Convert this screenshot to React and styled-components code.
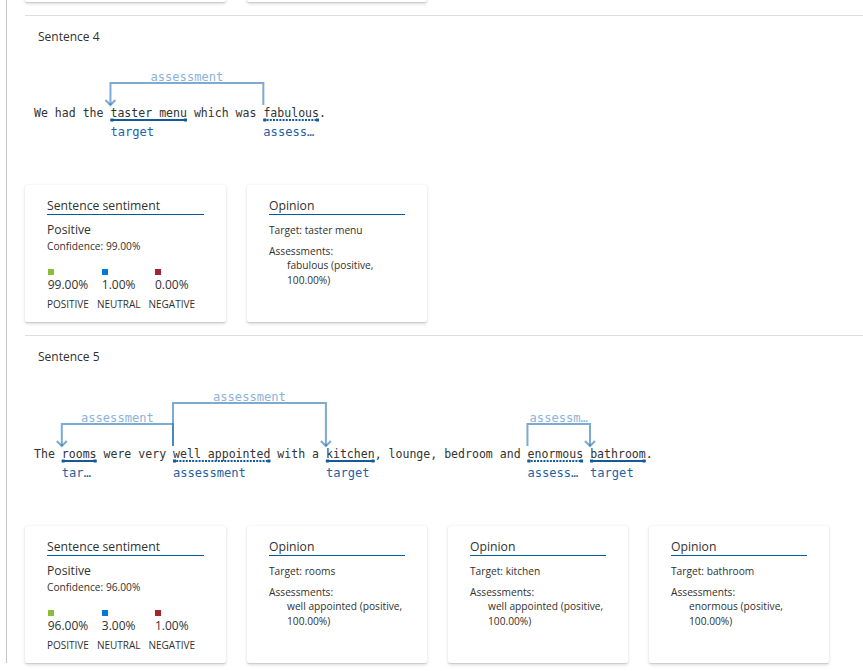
import React from "react";
import styled, { createGlobalStyle } from "styled-components";

const GlobalStyle = createGlobalStyle`
  html, body { margin: 0; padding: 0; background: #ffffff; }
  body { font-family: "Open Sans", "Noto Sans", sans-serif; color: #323130; }
`;

const CW = 6.95;
const X0 = 9;
const MONO = '"DejaVu Sans Mono", "Liberation Mono", monospace';
const LABEL_CW = 7.3;

const Page = styled.div`
  padding-left: 6px;
  height: 671px;
  overflow: hidden;
`;

const Rail = styled.div`
  border-left: 1px solid #c8c6c4;
  padding-left: 18px;
  min-height: 671px;
`;

const CardRow = styled.div`
  display: flex;
  gap: 21px;
  align-items: stretch;
  margin-top: ${(p) => p.$top}px;
`;

const Card = styled.div`
  width: ${(p) => p.$w}px;
  box-sizing: border-box;
  padding: 12px 22px 11px;
  background: #ffffff;
  border-radius: 2px;
  box-shadow: 0 1.6px 3.6px 0 rgba(0, 0, 0, 0.132), 0 0.3px 0.9px 0 rgba(0, 0, 0, 0.108);
`;

const StubCard = styled(Card)`
  height: 137px;
`;

const Section = styled.section`
  border-top: 1px solid #e1dfdd;
  margin-top: 13px;
`;

const Title = styled.div`
  margin: 13px 0 0 13px;
  font-size: 12px;
  line-height: 16px;
  color: #323130;
`;

const DiagramSvg = styled.svg`
  display: block;
  margin-top: 9px;
  overflow: visible;
`;

const Heading = styled.div`
  font-size: 12.2px;
  line-height: 17px;
  border-bottom: 1px solid #005a9e;
  color: #323130;
`;

const SentimentLabel = styled.div`
  margin-top: 6px;
  font-size: 12.2px;
  line-height: 18px;
`;

const Small = styled.div`
  font-size: 10.2px;
  line-height: 14px;
  margin-top: ${(p) => p.$top || 0}px;
`;

const Legend = styled.div`
  display: flex;
  gap: 8px;
  margin-top: 16px;
`;

const LegendCol = styled.div`
  display: flex;
  flex-direction: column;
  align-items: center;
`;

const ValueBlock = styled.div`
  display: flex;
  flex-direction: column;
  align-items: flex-start;
`;

const Swatch = styled.div`
  width: 6px;
  height: 6px;
  background: ${(p) => p.$color};
`;

const Value = styled.div`
  margin-top: 2px;
  font-size: 12px;
  line-height: 16px;
`;

const LegendLabel = styled.div`
  margin-top: 4px;
  font-size: 10px;
  line-height: 14px;
`;

const AssessList = styled.div`
  padding-left: 18px;
  margin-right: -4px;
  font-size: 10.2px;
  line-height: 15px;
`;

function truncate(label, width) {
  const fit = Math.floor(width / LABEL_CW);
  if (label.length <= fit) return label;
  return label.slice(0, Math.max(fit - 1, 1)) + "…";
}

function Diagram({ sentence, spans, arcs }) {
  const levels = Math.max(...arcs.map((a) => a.level));
  const textY = 38 + 21 * levels;
  const height = textY + 32;
  const xs = (i) => X0 + i * CW;
  const bottom = textY - 8;
  return (
    <DiagramSvg width="838" height={height}>
      {arcs.map((a, i) => {
        const s = xs(spans[a.from].idx);
        const t = xs(spans[a.to].idx);
        const top = textY - 9 - 21 * a.level;
        const left = Math.min(s, t);
        const right = Math.max(s, t);
        return (
          <g key={"arc" + i}>
            <path
              d={`M${s} ${bottom} V${top} H${t} V${bottom}`}
              stroke="#2671b4"
              strokeOpacity="0.6"
              strokeWidth="2"
              fill="none"
            />
            <path
              d={`M${t - 5} ${bottom - 5} L${t} ${bottom} L${t + 5} ${bottom - 5}`}
              stroke="#2671b4"
              strokeOpacity="0.6"
              strokeWidth="2"
              fill="none"
            />
            <text
              x={(left + right) / 2}
              y={top - 6}
              textAnchor="middle"
              dominantBaseline="central"
              fontFamily={MONO}
              fontSize="12.1"
              fill="#8cb3da"
            >
              {truncate("assessment", right - left)}
            </text>
          </g>
        );
      })}
      <text
        x={X0}
        y={textY}
        dominantBaseline="central"
        fontFamily={MONO}
        fontSize="11.55"
        fill="#333333"
        style={{ whiteSpace: "pre" }}
      >
        {sentence}
      </text>
      {spans.map((sp, i) => {
        const x = xs(sp.idx);
        const w = sp.len * CW;
        const uy = textY + 7;
        return (
          <g key={"sp" + i}>
            <line
              x1={x}
              x2={x + w}
              y1={uy}
              y2={uy}
              stroke="#145a9b"
              strokeWidth="2"
              strokeDasharray={sp.kind === "assessment" ? "2 1.2" : undefined}
            />
            <rect x={x} y={uy - 1.5} width="3" height="3" fill="#145a9b" />
            <rect x={x + w - 3} y={uy - 1.5} width="3" height="3" fill="#145a9b" />
            <text
              x={x}
              y={textY + 19}
              dominantBaseline="central"
              fontFamily={MONO}
              fontSize="12.1"
              fill="#1f62a5"
            >
              {truncate(sp.kind, w)}
            </text>
          </g>
        );
      })}
    </DiagramSvg>
  );
}

function SentimentCard({ label, confidence, scores }) {
  const cols = [
    { color: "#8cbd3a", value: scores[0], name: "POSITIVE" },
    { color: "#0078d4", value: scores[1], name: "NEUTRAL" },
    { color: "#a4262c", value: scores[2], name: "NEGATIVE" },
  ];
  return (
    <Card $w={201}>
      <Heading>Sentence sentiment</Heading>
      <SentimentLabel>{label}</SentimentLabel>
      <Small>Confidence: {confidence}</Small>
      <Legend>
        {cols.map((c) => (
          <LegendCol key={c.name}>
            <ValueBlock>
              <Swatch $color={c.color} />
              <Value>{c.value}</Value>
            </ValueBlock>
            <LegendLabel>{c.name}</LegendLabel>
          </LegendCol>
        ))}
      </Legend>
    </Card>
  );
}

function OpinionCard({ target, assessment }) {
  return (
    <Card $w={180}>
      <Heading>Opinion</Heading>
      <Small $top={8}>Target: {target}</Small>
      <Small $top={7}>Assessments:</Small>
      <AssessList>{assessment}</AssessList>
    </Card>
  );
}

const sections = [
  {
    title: "Sentence 4",
    sentence: "We had the taster menu which was fabulous.",
    spans: [
      { idx: 11, len: 11, kind: "target" },
      { idx: 33, len: 8, kind: "assessment" },
    ],
    arcs: [{ from: 1, to: 0, level: 1 }],
    sentiment: { label: "Positive", confidence: "99.00%", scores: ["99.00%", "1.00%", "0.00%"] },
    opinions: [{ target: "taster menu", assessment: "fabulous (positive, 100.00%)" }],
  },
  {
    title: "Sentence 5",
    sentence:
      "The rooms were very well appointed with a kitchen, lounge, bedroom and enormous bathroom.",
    spans: [
      { idx: 4, len: 5, kind: "target" },
      { idx: 20, len: 14, kind: "assessment" },
      { idx: 42, len: 7, kind: "target" },
      { idx: 71, len: 8, kind: "assessment" },
      { idx: 80, len: 8, kind: "target" },
    ],
    arcs: [
      { from: 1, to: 0, level: 1 },
      { from: 1, to: 2, level: 2 },
      { from: 3, to: 4, level: 1 },
    ],
    sentiment: { label: "Positive", confidence: "96.00%", scores: ["96.00%", "3.00%", "1.00%"] },
    opinions: [
      { target: "rooms", assessment: "well appointed (positive, 100.00%)" },
      { target: "kitchen", assessment: "well appointed (positive, 100.00%)" },
      { target: "bathroom", assessment: "enormous (positive, 100.00%)" },
    ],
  },
];

export default function App() {
  return (
    <>
      <GlobalStyle />
      <Page>
        <Rail>
          <CardRow $top={-135}>
            <StubCard $w={201} />
            <StubCard $w={180} />
          </CardRow>
          {sections.map((s) => (
            <Section key={s.title}>
              <Title>{s.title}</Title>
              <Diagram sentence={s.sentence} spans={s.spans} arcs={s.arcs} />
              <CardRow $top={40}>
                <SentimentCard {...s.sentiment} />
                {s.opinions.map((o) => (
                  <OpinionCard key={o.target} {...o} />
                ))}
              </CardRow>
            </Section>
          ))}
        </Rail>
      </Page>
    </>
  );
}
